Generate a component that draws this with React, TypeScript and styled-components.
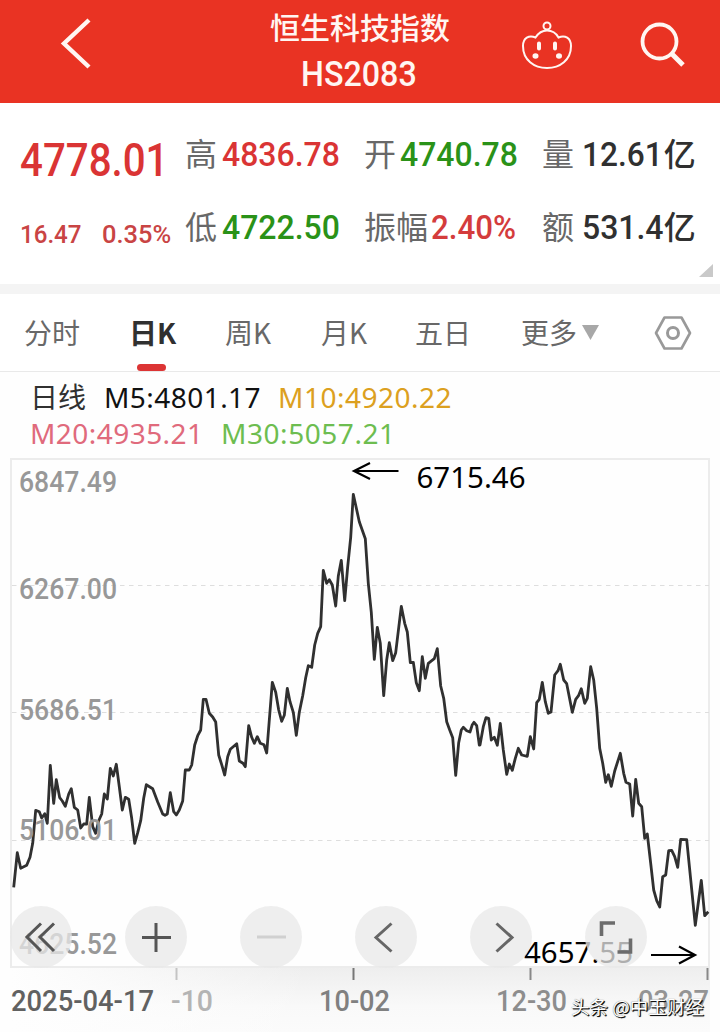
import React from "react";
import styled, { createGlobalStyle } from "styled-components";

const RED = "#da3434";
const GREEN = "#2a9218";
const DARK = "#303030";

const GlobalStyle = createGlobalStyle`
  * { box-sizing: border-box; }
  body {
    margin: 0;
    background: #fff;
    font-family: "Noto Sans", "Noto Sans CJK SC", sans-serif;
  }
`;

const Screen = styled.main`
  display: flex;
  flex-direction: column;
  width: 720px;
  height: 1032px;
  overflow: hidden;
  background: #fefefe;
`;

const Header = styled.header`
  display: grid;
  grid-template-columns: 225px 270px 104px 1fr;
  height: 103px;
  flex: none;
  background: #e93323;
  color: #fff6f2;
`;

const HeaderCell = styled.div<{ $top: number; $left: number }>`
  padding: ${(p) => p.$top}px 0 0 ${(p) => p.$left}px;
  svg { display: block; }
`;

const Title = styled.div`
  display: flex;
  flex-direction: column;
  align-items: center;
  padding-top: 4px;
  white-space: nowrap;
`;

const Name = styled.div`
  font: 500 30px/44px "Noto Sans CJK SC", sans-serif;
`;

const Code = styled.div`
  margin-top: 4px;
  margin-right: 3px;
  font: 500 34.5px/44px Roboto, sans-serif;
  transform: scaleX(0.935);
`;

const Quote = styled.section`
  position: relative;
  display: grid;
  grid-template-columns: 164px 179px 178px 1fr;
  grid-template-rows: 73px 73px;
  padding: 18px 0 0 21px;
  height: 181px;
  flex: none;
  background: #fff;
`;

const Num = styled.span<{ $size: number; $scale: number; $color: string }>`
  display: inline-block;
  font-family: Roboto, sans-serif;
  font-size: ${(p) => p.$size}px;
  font-weight: 500;
  color: ${(p) => p.$color};
  transform: scaleX(${(p) => p.$scale});
  transform-origin: left center;
  white-space: nowrap;
`;

const Last = styled.div`
  line-height: 78px;
  margin-left: -1px;
`;

const Change = styled.div`
  display: grid;
  grid-template-columns: 82px 80px;
  line-height: 80px;
  margin-left: -1px;
`;

const Stat = styled.div<{ $label: number }>`
  display: grid;
  grid-template-columns: ${(p) => p.$label}px 1fr;
  line-height: 67px;
  white-space: nowrap;
`;

const Label = styled.span`
  font: 400 32px/62px "Noto Sans CJK SC", sans-serif;
  color: #686868;
`;

const Value = styled.div`
  display: flex;
`;

const Unit = styled.span<{ $pull: number }>`
  font: 500 32px/62px "Noto Sans CJK SC", sans-serif;
  color: ${DARK};
  margin-left: ${(p) => p.$pull}px;
`;

const Expander = styled.div`
  position: absolute;
  right: 7px;
  bottom: 7px;
  svg { display: block; }
`;

const Divider = styled.div`
  height: 10px;
  flex: none;
  background: #f4f4f4;
`;

const Tabs = styled.nav`
  display: grid;
  grid-template-columns: 105px 96px 96px 94px 106px 133px 1fr;
  padding-left: 24px;
  height: 78px;
  flex: none;
  border-bottom: 1px solid #e9e9e9;
  background: #fff;
`;

const Tab = styled.div<{ $active?: boolean }>`
  display: flex;
  flex-direction: column;
  align-items: flex-start;
  font: ${(p) => (p.$active ? 700 : 400)} 28px/77px "Noto Sans CJK SC", sans-serif;
  color: ${(p) => (p.$active ? DARK : "#686868")};
  white-space: nowrap;
`;

const ActiveBar = styled.i`
  width: 29px;
  height: 7px;
  margin: -7px 0 0 8px;
  border-radius: 4px;
  background: #dc3434;
`;

const More = styled(Tab)`
  flex-direction: row;
  gap: 5px;
  svg { margin-top: 31px; }
`;

const Settings = styled.div`
  padding-top: 21px;
`;

const Legend = styled.div`
  height: 86px;
  flex: none;
  padding: 7px 0 0 30px;
`;

const LegendRow = styled.div`
  display: flex;
  height: 36px;
  line-height: 36px;
`;

const Average = styled.span<{ $color: string; $width: number; $gap: number }>`
  width: ${(p) => p.$width}px;
  font-size: 28px;
  letter-spacing: ${(p) => p.$gap}px;
  color: ${(p) => p.$color};
  white-space: nowrap;
`;

const ChartArea = styled.section`
  position: relative;
  height: 574px;
  flex: none;
`;

const Controls = styled.div`
  position: absolute;
  left: 10px;
  top: 448px;
  display: flex;
  gap: 53px;
`;

const RoundButton = styled.button`
  width: 62px;
  height: 62px;
  padding: 0;
  border: 0;
  border-radius: 50%;
  background: rgba(232, 232, 232, 0.75);
  svg { display: block; }
`;

const Watermark = styled.div`
  position: absolute;
  left: 571px;
  top: 535px;
  font: 400 18.5px/26px "Noto Sans CJK SC", sans-serif;
  color: #fff;
  text-shadow: 1px 1px 0 #111, 1px 1px 1px #222, 0 0 1px #666;
  white-space: nowrap;
`;

/* Each run of prices is stored in thirds of a pixel from its own origin. */
const runs = [
  {
    x: 0,
    y: 450,
    points:
      "41,1312 52,1208 62,1255 80,1246 90,1222 98,1180 107,1081 118,1085 125,1104 134,1091 142,1120 151,946 161,1060 169,989 179,1043 187,1053 196,1069 206,1032 214,1016 223,1072 233,1080 242,1134 251,1122 260,1122 268,1042 278,1130 287,1150 296,1112 305,1092 313,1032 322,1047 331,955 340,978 349,943 358,1010 367,1080 376,1042 386,1048 395,1105 404,1180 413,1148 422,1112 431,1045 439,1004 458,1016 473,1056 488,1092 495,1096 502,1092 511,1028 521,1085 529,1095 538,1080 548,1053 556,960 568,960 575,945 584,885 593,857 602,840 610,748 618,748 628,790 638,801 647,816 656,915 665,944 674,975 683,920 691,898 710,881 718,933",
  },
  {
    x: 240,
    y: 450,
    points:
      "9,940 16,950 26,827 35,862 43,880 52,860 61,880 72,884 80,909 97,697 107,727 116,780 125,814 133,796 142,715 150,755 160,787 169,856 178,787 188,737 197,683 205,647 215,652 224,585 233,550 242,530 250,361 260,400 268,389 277,405 287,468 295,378 304,331 314,452 323,350 332,262 340,133 358,215 376,266 385,400 394,487 403,628 412,532 421,580 431,737 440,630 448,578 458,632 467,608 484,469 494,520 502,546 511,638 520,637 529,698 538,722 547,620 556,685 565,640 583,626 592,596 602,708 611,745 620,815 629,840 638,863 647,976 656,878 664,840 670,832 680,842 690,846 697,824 702,817 710,827 718,885",
  },
  {
    x: 480,
    y: 630,
    points:
      "0,345 10,290 18,263 26,265 34,330 43,322 52,346 61,280 70,360 80,433 88,402 97,421 106,385 115,355 125,375 142,379 151,320 161,357 170,218 178,208 187,157 196,215 205,250 213,246 224,135 234,122 241,103 251,150 260,161 277,247 287,208 296,196 304,176 314,220 322,205 332,110 341,150 350,235 359,355 368,400 377,457 385,434 394,469 404,423 421,370 431,430 438,457 449,462 458,558 467,448 476,520 485,530 494,625 502,612 512,700 521,780 530,812 539,831 548,740 557,735 566,662 575,661 584,680 593,712 602,628 620,629 646,886 664,751 674,857 685,845",
  },
];

const linePoints = runs
  .flatMap((run) =>
    run.points.split(" ").map((pair) => {
      const [x, y] = pair.split(",").map(Number);
      return `${(run.x + x / 3).toFixed(1)},${(run.y - 458 + y / 3).toFixed(1)}`;
    })
  )
  .join(" ");

const priceLabels = [
  { text: "6847.49", y: 34 },
  { text: "6267.00", y: 141 },
  { text: "5686.51", y: 262 },
  { text: "5106.01", y: 382 },
  { text: "4625.52", y: 496 },
];

const ticks = [
  { x: 176.5, color: "#c4c4c4" },
  { x: 353.5, color: "#777" },
  { x: 530.5, color: "#888" },
  { x: 707.5, color: "#888" },
];

const dates = [
  { text: "2025-04-17", x: 11, width: 143, color: "#616161" },
  { text: "-10", x: 171, width: 42, color: "#b4b4b4" },
  { text: "10-02", x: 319, width: 71, color: "#808080" },
  { text: "12-30", x: 496, width: 71, color: "#8d8d8d" },
  { text: "03-27", x: 638, width: 71, color: "#949494" },
];

function Chart() {
  return (
    <svg width="720" height="574" viewBox="0 0 720 574" display="block">
      <defs>
        <linearGradient id="haze" x1="0" x2="0" y1="0" y2="1">
          <stop offset="0" stopColor="#eeeeee" />
          <stop offset="0.6" stopColor="#f9f9f9" />
          <stop offset="1" stopColor="#fbfbfb" />
        </linearGradient>
        <linearGradient id="side" x1="0" x2="1" y1="0" y2="0">
          <stop offset="0" stopColor="#fefefe" />
          <stop offset="1" stopColor="#fefefe" stopOpacity="0" />
        </linearGradient>
      </defs>
      <rect x="11" y="510" width="699" height="64" fill="url(#haze)" />
      <rect x="10" y="510" width="300" height="64" fill="url(#side)" />
      <rect x="11" y="1" width="698" height="508" fill="none" stroke="#ececec" strokeWidth="2" />
      {[127.5, 254.5, 382.5].map((y) => (
        <path key={y} d={`M12 ${y}H709`} stroke="#dedede" strokeDasharray="4.5 4.5" />
      ))}
      <polyline points={linePoints} fill="none" stroke="#303030" strokeWidth="2.8" strokeLinejoin="round" />
      <g fontFamily="Roboto, sans-serif" fontSize="29" fontWeight="500" fill="#989898">
        {priceLabels.map((label) => (
          <text key={label.text} x="19" y={label.y} textLength="98" lengthAdjust="spacingAndGlyphs">
            {label.text}
          </text>
        ))}
      </g>
      <g fontFamily="Noto Sans, sans-serif" fontSize="29" fill="#000">
        <text x="416.500" y="30" textLength="109" lengthAdjust="spacingAndGlyphs">6715.46</text>
        <text x="524" y="504.500" textLength="109" lengthAdjust="spacingAndGlyphs">4657.55</text>
      </g>
      <g fill="none" stroke="#000" strokeWidth="2.2">
        <path d="M398.500 13H354M370 5L354 13L370 21" />
        <path d="M651 497H695M679 488.500L695 497L679 505.500" />
      </g>
      {ticks.map((tick) => (
        <path key={tick.x} d={`M${tick.x} 510V522`} stroke={tick.color} strokeWidth="2" />
      ))}
      <g fontFamily="Roboto, sans-serif" fontSize="29.500" fontWeight="500">
        {dates.map((date) => (
          <text
            key={date.text}
            x={date.x}
            y="553"
            fill={date.color}
            textLength={date.width}
            lengthAdjust="spacingAndGlyphs"
          >
            {date.text}
          </text>
        ))}
      </g>
    </svg>
  );
}

const controls = [
  { name: "fast-back", color: "#555", weight: 3, d: "M31 17.500L17 31L31 45M44 17.500L30 31L44 45" },
  { name: "zoom-in", color: "#555", weight: 3, d: "M31 17V46M17 31.500H46" },
  { name: "zoom-out", color: "#d0d0d0", weight: 3, d: "M17 31H46" },
  { name: "previous", color: "#666", weight: 3, d: "M36.500 17.500L21 31.500L36.500 45.500" },
  { name: "next", color: "#666", weight: 3, d: "M26.500 17.500L42 31.500L26.500 45.500" },
  { name: "fullscreen", color: "#6c6c6c", weight: 3.6, d: "M16.500 30V17H30M45.500 32.500V46H32.500" },
];

export default function App() {
  return (
    <Screen>
      <GlobalStyle />
      <Header>
        <HeaderCell $top={16} $left={58}>
          <svg width="36" height="56" fill="none" stroke="currentColor" strokeWidth="4.400">
            <path d="M31 4L6 27.500L31 51" />
          </svg>
        </HeaderCell>
        <Title>
          <Name>恒生科技指数</Name>
          <Code>HS2083</Code>
        </Title>
        <HeaderCell $top={20} $left={25}>
          <svg width="54" height="52" fill="none" stroke="currentColor" strokeWidth="2">
            <circle cx="27" cy="6" r="3.500" />
            <path d="M15.500 17.500C19 12 23 10.500 27 10.500S35.500 12 38.500 17.500C45 14.500 51 18 51 26C51 40 40 48 27 48S3 40 3 26C3 18 9 14.500 15.500 17.500Z" />
            <path d="M19 23.500V28.500M35 23.500V28.500" strokeWidth="4" strokeLinecap="round" />
            <ellipse cx="15.500" cy="36" rx="3" ry="2.700" fill="currentColor" stroke="none" />
            <ellipse cx="39" cy="36" rx="3" ry="2.700" fill="currentColor" stroke="none" />
          </svg>
        </HeaderCell>
        <HeaderCell $top={20} $left={38}>
          <svg width="54" height="50" fill="none" stroke="currentColor" strokeWidth="3.800">
            <circle cx="22.500" cy="21.500" r="17" />
            <path d="M34 33L46 45" strokeWidth="5" />
          </svg>
        </HeaderCell>
      </Header>

      <Quote>
        <Last>
          <Num $size={46} $scale={0.875} $color={RED}>4778.01</Num>
        </Last>
        <Stat $label={37}>
          <Label>高</Label>
          <Value><Num $size={34} $scale={0.94} $color={RED}>4836.78</Num></Value>
        </Stat>
        <Stat $label={36}>
          <Label>开</Label>
          <Value><Num $size={34} $scale={0.94} $color={GREEN}>4740.78</Num></Value>
        </Stat>
        <Stat $label={40}>
          <Label>量</Label>
          <Value>
            <Num $size={34} $scale={0.93} $color={DARK}>12.61</Num>
            <Unit $pull={-5}>亿</Unit>
          </Value>
        </Stat>
        <Change>
          <Num $size={26.5} $scale={0.91} $color="#c94444">16.47</Num>
          <Num $size={26.5} $scale={0.96} $color="#c94444">0.35%</Num>
        </Change>
        <Stat $label={37}>
          <Label>低</Label>
          <Value><Num $size={34} $scale={0.94} $color={GREEN}>4722.50</Num></Value>
        </Stat>
        <Stat $label={67}>
          <Label>振幅</Label>
          <Value><Num $size={34} $scale={0.92} $color="#d43c3c">2.40%</Num></Value>
        </Stat>
        <Stat $label={40}>
          <Label>额</Label>
          <Value>
            <Num $size={34} $scale={0.94} $color={DARK}>531.4</Num>
            <Unit $pull={-5}>亿</Unit>
          </Value>
        </Stat>
        <Expander>
          <svg width="14" height="13"><path d="M14 0V13H0Z" fill="#c9c9c9" /></svg>
        </Expander>
      </Quote>

      <Divider />

      <Tabs>
        <Tab>分时</Tab>
        <Tab $active>
          日K
          <ActiveBar />
        </Tab>
        <Tab>周K</Tab>
        <Tab>月K</Tab>
        <Tab>五日</Tab>
        <More>
          更多
          <svg width="17" height="15"><path d="M0 0H17L8.500 15Z" fill="#a8a8a8" /></svg>
        </More>
        <Settings>
          <svg width="38" height="36" fill="none" stroke="#999" strokeWidth="2.600" strokeLinejoin="round">
            <path d="M10.500 2.500H27.500L36 18L27.500 33.500H10.500L2 18Z" />
            <circle cx="19" cy="18" r="5.500" strokeWidth="3" />
          </svg>
        </Settings>
      </Tabs>

      <Legend>
        <LegendRow>
          <Average $color={DARK} $width={74} $gap={0}>日线</Average>
          <Average $color="#111" $width={174} $gap={0.45}>M5:4801.17</Average>
          <Average $color="#dca020" $width={180} $gap={0.5}>M10:4920.22</Average>
        </LegendRow>
        <LegendRow>
          <Average $color="#e06a7c" $width={191} $gap={0.45}>M20:4935.21</Average>
          <Average $color="#6dbd50" $width={180} $gap={0.55}>M30:5057.21</Average>
        </LegendRow>
      </Legend>

      <ChartArea>
        <Chart />
        <Controls>
          {controls.map((control) => (
            <RoundButton key={control.name} aria-label={control.name}>
              <svg width="62" height="62" fill="none" stroke={control.color} strokeWidth={control.weight}>
                <path d={control.d} />
              </svg>
            </RoundButton>
          ))}
        </Controls>
        <Watermark>头条 @中玉财经</Watermark>
      </ChartArea>
    </Screen>
  );
}
